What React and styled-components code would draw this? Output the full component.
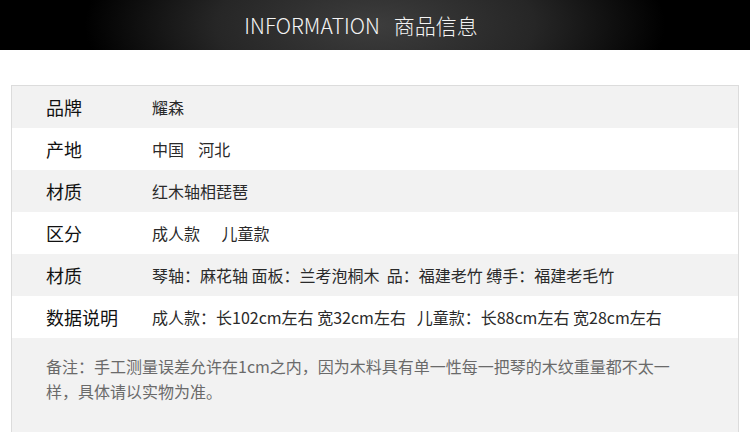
import React from "react"
import styled, { createGlobalStyle } from "styled-components"

const Global = createGlobalStyle`
  html, body {
    margin: 0;
    padding: 0;
    background: #fff;
    overflow: hidden;
  }
  body {
    font-family: "Noto Sans CJK SC", "Noto Sans", sans-serif;
  }
`

const Header = styled.header`
  height: 50px;
  display: flex;
  align-items: center;
  justify-content: center;
  background: radial-gradient(ellipse 290px 120px at 50% 50%, #3d3d3d 0%, #262626 55%, #000 100%);
`

const Title = styled.h1`
  margin: 0;
  padding-right: 28px;
  color: #f4f4f4;
  font-size: 21px;
  font-weight: 300;
  white-space: pre;
`

const Table = styled.section`
  margin: 35px 11px 0 11px;
  border: 1px solid #dcdcdc;
  border-bottom: none;
`

const Row = styled.div`
  display: grid;
  grid-template-columns: 106px 1fr;
  align-items: center;
  height: 42px;
  padding-left: 34px;
  background: ${({ $shade }) => ($shade ? "#f2f2f2" : "#fff")};
`

const Label = styled.span`
  font-size: 18px;
  color: #111;
`

const Value = styled.span`
  font-size: 16px;
  color: #2a2a2a;
  white-space: pre;
`

const Note = styled.div`
  background: #f2f2f2;
  padding: 16px 0 40px 34px;
  min-height: 60px;
`

const NoteText = styled.p`
  margin: 0;
  max-width: 630px;
  font-size: 16px;
  line-height: 25px;
  color: #6a6a6a;
`

const rows = [
  ["品牌", "耀森"],
  ["产地", "中国    河北"],
  ["材质", "红木轴相琵琶"],
  ["区分", "成人款      儿童款"],
  ["材质", "琴轴：麻花轴 面板：兰考泡桐木  品：福建老竹 缚手：福建老毛竹"],
  ["数据说明", "成人款：长102cm左右 宽32cm左右   儿童款：长88cm左右 宽28cm左右"],
]

export default function App() {
  return (
    <>
      <Global />
      <Header>
        <Title>{"INFORMATION   商品信息"}</Title>
      </Header>
      <Table>
        {rows.map(([label, value], i) => (
          <Row key={i} $shade={i % 2 === 0}>
            <Label>{label}</Label>
            <Value>{value}</Value>
          </Row>
        ))}
        <Note>
          <NoteText>
            备注：手工测量误差允许在1cm之内，因为木料具有单一性每一把琴的木纹重量都不太一样，具体请以实物为准。
          </NoteText>
        </Note>
      </Table>
    </>
  )
}
